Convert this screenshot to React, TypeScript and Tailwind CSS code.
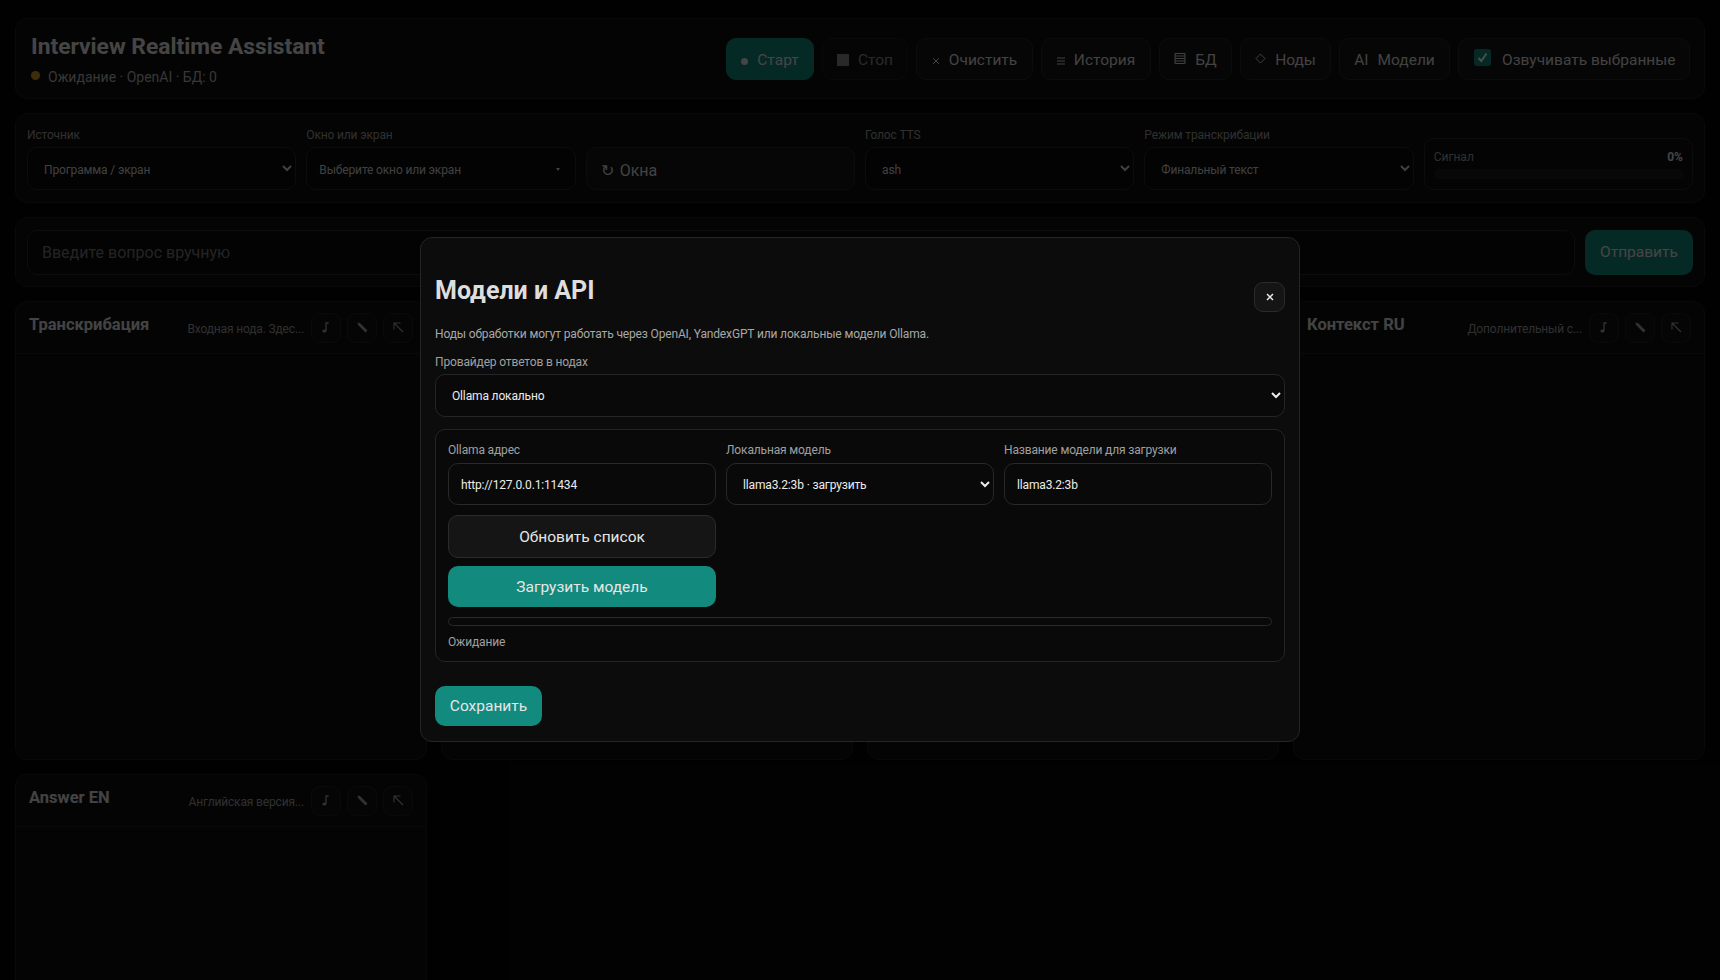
const font = { fontFamily: 'Roboto,"Open Sans",sans-serif' };

function Ico({ children, w = 12, h = 12, className = '' }: { children: React.ReactNode; w?: number; h?: number; className?: string }) {
  return (
    <svg width={w} height={h} viewBox={`0 0 ${w} ${h}`} fill="none" stroke="currentColor" strokeWidth="1" className={`shrink-0 ${className}`}>
      {children}
    </svg>
  );
}

function TopBtn({ w, icon, label, primary, dim }: { w: string; icon: React.ReactNode; label: string; primary?: boolean; dim?: boolean }) {
  return (
    <button className={`${w} h-[42px] shrink-0 flex items-center justify-center gap-[9px] pt-[5px] rounded-[10px] border text-[15.5px] ${primary ? 'bg-[#128a7e] border-[#128a7e] text-[#e6e6e6]' : 'bg-[#151515] border-[#292929] text-[#dddddd]'} ${dim ? 'opacity-60' : ''}`}>
      {icon}
      <span>{label}</span>
    </button>
  );
}

function Field({ label, value, chevron = true }: { label: string; value: string; chevron?: boolean }) {
  return (
    <div className="flex flex-col min-w-0">
      <label className="h-[21px] text-[12px] tracking-[-0.15px] leading-[18px] text-[#a0a0a0]">{label}</label>
      {chevron ? (
        <select className="h-[43px] w-full rounded-[10px] border border-[#292929] bg-[#0a0a0a] pl-[12px] pt-[2px] text-[12px] tracking-[-0.15px] text-[#d8d8d8] outline-none [color-scheme:dark]">
          <option>{value}</option>
        </select>
      ) : (
        <div className="h-[43px] w-full rounded-[10px] border border-[#292929] bg-[#0a0a0a] pl-[12px] pr-[15px] pt-[2px] text-[12px] tracking-[-0.15px] text-[#d8d8d8] flex items-center justify-between">
          <span>{value}</span>
          <span className="w-0 h-0 border-x-[2.5px] border-x-transparent border-t-[3px] border-t-[#d8d8d8]" />
        </div>
      )}
    </div>
  );
}

function IconBtn({ children }: { children: React.ReactNode }) {
  return (
    <button className="w-[30px] h-[30px] shrink-0 rounded-[9px] border border-[#242424] bg-[#121212] text-[#a8a8a8] flex items-center justify-center leading-none">
      {children}
    </button>
  );
}

function Note() {
  return (
    <svg width="10" height="11" viewBox="0 0 10 11" fill="none">
      <ellipse cx="3.4" cy="9" rx="2" ry="1.6" fill="currentColor" />
      <path d="M5 9 V1 H7.6" stroke="currentColor" strokeWidth="1.3" />
    </svg>
  );
}

function Pencil() {
  return (
    <svg width="11" height="11" viewBox="0 0 11 11"><path d="M0.5 0.5 L3 1 L10.5 8.5 L8.5 10.5 L1 3 Z" fill="currentColor" /></svg>
  );
}

function Corner() {
  return (
    <svg width="11" height="11" viewBox="0 0 11 11" fill="none" stroke="currentColor" strokeWidth="1.1"><path d="M1 7.5 V1 H7.5 M1.5 1.5 L10 10" /></svg>
  );
}

function Panel({ title, sub }: { title?: string; sub?: string }) {
  return (
    <section className="h-[459px] rounded-[12px] border border-[#1f1f1f] bg-[#0e0e0e] flex flex-col overflow-hidden">
      <header className="h-[52px] shrink-0 border-b border-[#1f1f1f] flex items-center justify-between px-[13px]">
        <h2 className="text-[16.5px] font-bold text-[#e2e2e2] -mt-[4px] whitespace-nowrap">{title}</h2>
        {sub ? (
          <div className="flex items-center gap-[6px]">
            <span className="text-[12px] tracking-[-0.15px] text-[#a0a0a0] mr-[1px] pt-[2px] whitespace-nowrap">{sub}</span>
            <IconBtn><Note /></IconBtn>
            <IconBtn><Pencil /></IconBtn>
            <IconBtn><Corner /></IconBtn>
          </div>
        ) : null}
      </header>
      <div className="flex-1" />
    </section>
  );
}

function ModalField({ label, children }: { label: string; children: React.ReactNode }) {
  return (
    <div className="flex flex-col min-w-0">
      <label className="h-[22px] text-[12px] tracking-[-0.15px] leading-[18px] text-[#a0a0a0]">{label}</label>
      {children}
    </div>
  );
}

export default function App() {
  return (
    <div style={font} className="relative h-screen overflow-hidden bg-[#050505]">
      <div className="flex flex-col gap-[14px] pt-[18px] px-[15px]">
        <div className="h-[81px] shrink-0 rounded-[12px] border border-[#1f1f1f] bg-[#0e0e0e] flex items-center justify-between pl-[15px] pr-[14px]">
          <div className="flex flex-col gap-[6px] pt-[3px]">
            <h1 className="text-[22.8px] font-bold leading-[28px] text-[#e6e6e6] whitespace-nowrap -mt-[2px]">Interview Realtime Assistant</h1>
            <div className="flex items-center gap-[8px] text-[14px] text-[#b8b8b8] leading-[18px] mt-[1px]">
              <span className="w-[9px] h-[9px] rounded-full bg-[#c9962c] -mt-[2px]" />
              <span>Ожидание · OpenAI · БД: 0</span>
            </div>
          </div>
          <div className="flex items-center gap-[8px]">
            <TopBtn w="w-[88px]" icon={<span className="w-[7px] h-[7px] rounded-full bg-current" />} label="Старт" primary />
            <TopBtn w="w-[86px]" icon={<span className="w-[12px] h-[12px] -mt-[2px] bg-current" />} label="Стоп" dim />
            <TopBtn w="w-[117px]" icon={<Ico w={8} h={8}><path d="M1 1 L7 7 M7 1 L1 7" /></Ico>} label="Очистить" />
            <TopBtn w="w-[110px]" icon={<Ico w={8} h={8}><path d="M0 1 H8 M0 4 H8 M0 7 H8" /></Ico>} label="История" />
            <TopBtn w="w-[73px]" icon={<Ico w={12} h={13} className="-mt-[5px]"><path d="M1 1.5 H11 V11.5 H1 Z M1 4 H11 M1 6.5 H11 M1 9 H11" /></Ico>} label="БД" />
            <TopBtn w="w-[91px]" icon={<Ico w={11} h={11} className="-mt-[5px]"><path d="M5.5 1 L10 5.5 L5.5 10 L1 5.5 Z" /></Ico>} label="Ноды" />
            <TopBtn w="w-[111px]" icon={<span>AI</span>} label="Модели" />
            <label className="w-[232px] h-[42px] shrink-0 flex items-center gap-[11px] rounded-[10px] border border-[#292929] bg-[#151515] pl-[15px] text-[15.5px] text-[#dddddd]">
              <span className="w-[17px] h-[17px] -mt-[3px] rounded-[3px] bg-[#128a7e] flex items-center justify-center text-white">
                <svg width="11" height="11" viewBox="0 0 11 11" fill="none" stroke="currentColor" strokeWidth="2"><path d="M1.5 6 L4.3 9 L9.5 1.5" /></svg>
              </span>
              <span className="whitespace-nowrap pt-[5px]">Озвучивать выбранные</span>
            </label>
          </div>
        </div>

        <div className="h-[90px] shrink-0 rounded-[12px] border border-[#1f1f1f] bg-[#0e0e0e] grid grid-cols-6 gap-[10px] px-[11px] items-end pb-[12px]">
          <Field label="Источник" value="Программа / экран" />
          <Field label="Окно или экран" value="Выберите окно или экран" chevron={false} />
          <button className="h-[43px] rounded-[10px] border border-[#292929] bg-[#151515] pl-[14px] pt-[4px] flex items-center gap-[6px] text-[16px] text-[#dddddd]"><span>↻</span><span>Окна</span></button>
          <Field label="Голос TTS" value="ash" />
          <Field label="Режим транскрибации" value="Финальный текст" />
          <div className="h-[52px] rounded-[10px] border border-[#292929] bg-[#0e0e0e] px-[9px] pt-[8px] flex flex-col gap-[2px]">
            <div className="flex justify-between text-[12px] leading-[20px] text-[#a0a0a0]"><span>Сигнал</span><b className="text-[#e0e0e0] font-bold">0%</b></div>
            <div className="h-[10px] rounded-full bg-[#1c1c1c]" />
          </div>
        </div>

        <div className="h-[70px] shrink-0 rounded-[12px] border border-[#1f1f1f] bg-[#0e0e0e] flex items-center gap-[10px] px-[11px]">
          <input readOnly placeholder="Введите вопрос вручную" className="flex-1 h-[45px] rounded-[10px] border border-[#292929] bg-[#0a0a0a] px-[14px] text-[16px] outline-none placeholder:text-[#7a7a7a]" />
          <button className="w-[108px] h-[45px] pt-[2px] rounded-[10px] bg-[#128a7e] text-[15.5px] text-[#e6e6e6]">Отправить</button>
        </div>

        <div className="grid grid-cols-4 gap-[14px]">
          <Panel title="Транскрибация" sub="Входная нода. Здес..." />
          <Panel />
          <Panel />
          <Panel title="Контекст RU" sub="Дополнительный с..." />
          <Panel title="Answer EN" sub="Английская версия..." />
        </div>
      </div>

      <div className="absolute inset-0 bg-black/70 flex items-center justify-center pb-[1px]">
        <div className="w-[880px] h-[505px] rounded-[12px] border border-[#252525] bg-[#0c0c0c] p-[14px] pb-[15px] flex flex-col">
          <div className="flex items-start justify-between pt-[23px] h-[74px] shrink-0">
            <h2 className="text-[25px] font-bold leading-[32px] text-[#dedede]">Модели и API</h2>
            <button className="w-[31px] h-[30px] mt-[7px] rounded-[9px] border border-[#2b2b2b] bg-[#151515] text-[#e8e8e8] flex items-center justify-center">
              <Ico w={8} h={8}><path d="M1 1 L7 7 M7 1 L1 7" strokeWidth="1.5" /></Ico>
            </button>
          </div>
          <p className="text-[12px] tracking-[-0.15px] leading-[18px] text-[#a8a8a8] mt-[-1px]">Ноды обработки могут работать через OpenAI, YandexGPT или локальные модели Ollama.</p>
          <label className="text-[12px] tracking-[-0.15px] leading-[18px] text-[#a0a0a0] mt-[10px] mb-[3px]">Провайдер ответов в нодах</label>
          <select className="h-[43px] shrink-0 w-full rounded-[10px] border border-[#252525] bg-[#090909] pl-[12px] pt-[1px] text-[12px] tracking-[-0.15px] text-[#ececec] outline-none [color-scheme:dark]">
            <option>Ollama локально</option>
          </select>
          <div className="mt-[12px] h-[233px] shrink-0 rounded-[10px] border border-[#252525] bg-[#090909] px-[12px] pt-[11px]">
            <div className="grid grid-cols-3 gap-[10px]">
              <ModalField label="Ollama адрес">
                <input readOnly value="http://127.0.0.1:11434" className="h-[42px] w-full rounded-[10px] border border-[#292929] bg-[#090909] px-[12px] pt-[1px] text-[12px] tracking-[-0.15px] text-[#ececec] outline-none" />
              </ModalField>
              <ModalField label="Локальная модель">
                <select className="h-[42px] w-full rounded-[10px] border border-[#292929] bg-[#090909] pl-[12px] pt-[1px] text-[12px] tracking-[-0.15px] text-[#ececec] outline-none [color-scheme:dark]">
                  <option>llama3.2:3b · загрузить</option>
                </select>
              </ModalField>
              <ModalField label="Название модели для загрузки">
                <input readOnly value="llama3.2:3b" className="h-[42px] w-full rounded-[10px] border border-[#292929] bg-[#090909] px-[12px] pt-[1px] text-[12px] tracking-[-0.15px] text-[#ececec] outline-none" />
              </ModalField>
            </div>
            <div className="grid grid-cols-3 gap-[10px] mt-[10px]">
              <div className="flex flex-col gap-[8px]">
                <button className="h-[43px] pt-[2px] rounded-[10px] border border-[#2b2b2b] bg-[#151515] text-[15.5px] text-[#e6e6e6]">Обновить список</button>
                <button className="h-[41px] pt-[3px] rounded-[10px] bg-[#128a7e] text-[15.5px] text-[#e6e6e6]">Загрузить модель</button>
              </div>
            </div>
            <div className="mt-[10px] h-[9px] rounded-full border border-[#292929] bg-[#090909]" />
            <div className="mt-[7px] text-[12px] tracking-[-0.15px] leading-[18px] text-[#a0a0a0]">Ожидание</div>
          </div>
          <button className="mt-[24px] w-[107px] h-[41px] pt-[2px] rounded-[10px] bg-[#128a7e] text-[15.5px] text-[#e6e6e6]">Сохранить</button>
        </div>
      </div>
    </div>
  );
}
